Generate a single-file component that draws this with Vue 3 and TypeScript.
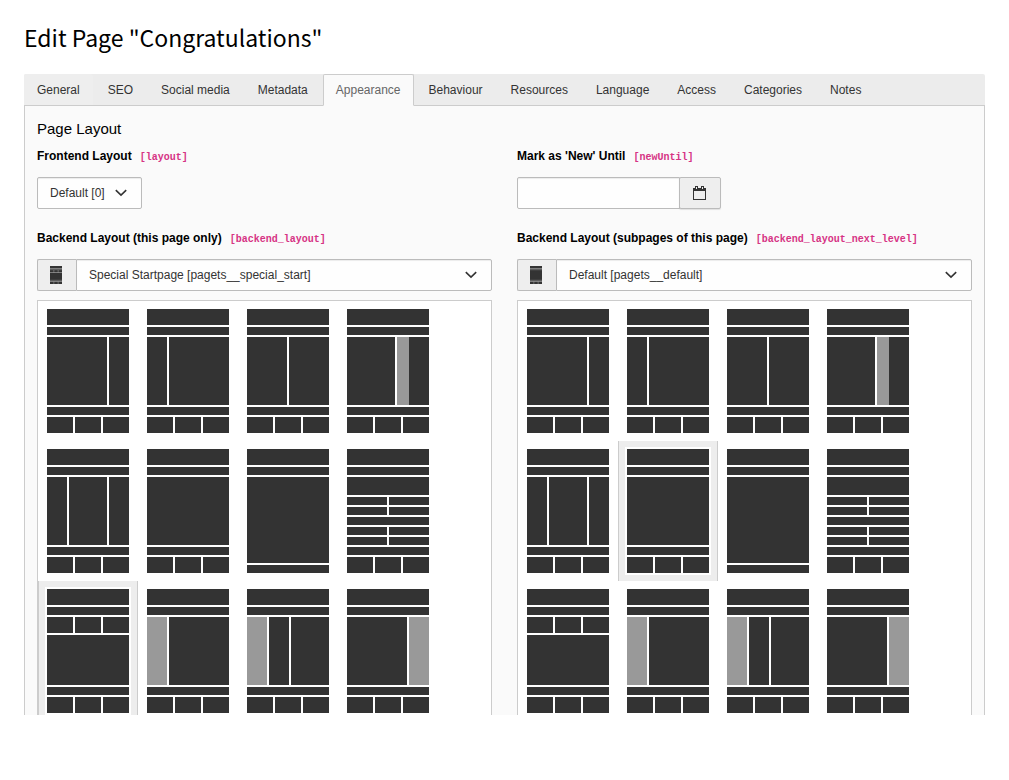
<script setup lang="ts">
import { ref } from 'vue'

interface Block {
  x: number
  y: number
  w: number
  h: number
  muted?: boolean
}

interface Layout {
  id: string
  name: string
  blocks: Block[]
}

const tabs = [
  'General', 'SEO', 'Social media', 'Metadata', 'Appearance', 'Behaviour',
  'Resources', 'Language', 'Access', 'Categories', 'Notes',
]
const activeTab = ref('Appearance')

const full = (y: number, h: number): Block => ({ x: 2, y, w: 82, h })
const thirds = (y: number, h: number): Block[] => [2, 30, 58].map((x) => ({ x, y, w: 26, h }))
const halves = (y: number, h: number): Block[] => [2, 44].map((x) => ({ x, y, w: 40, h }))
const column = (x: number, w: number, muted = false): Block => ({ x, y: 30, w, h: 68, muted })

const header = [full(2, 16), full(20, 8)]
const footer = [full(100, 8), ...thirds(110, 16)]
const page = (...content: Block[]): Block[] => [...header, ...content, ...footer]

const layouts: Layout[] = [
  { id: '2_columns', name: '2 Columns', blocks: page(column(2, 60), column(64, 20)) },
  { id: '2_columns_left', name: '2 Columns Left', blocks: page(column(2, 20), column(24, 60)) },
  { id: '2_columns_50', name: '2 Columns 50/50', blocks: page(column(2, 40), column(44, 40)) },
  { id: '2_columns_offset', name: '2 Columns Offset', blocks: page(column(2, 48), column(52, 12, true), column(64, 20)) },
  { id: '3_columns', name: '3 Columns', blocks: page(column(2, 20), column(24, 38), column(64, 20)) },
  { id: 'default', name: 'Default', blocks: page(column(2, 82)) },
  { id: 'simple', name: 'Simple', blocks: [...header, full(30, 86), full(118, 8)] },
  {
    id: 'special_feature',
    name: 'Special Feature',
    blocks: page(full(30, 18), ...halves(50, 8), ...halves(60, 8), full(70, 8), ...halves(80, 8), ...halves(90, 8)),
  },
  { id: 'special_start', name: 'Special Startpage', blocks: page(...thirds(30, 16), full(48, 50)) },
  { id: 'subnavigation_left', name: 'Subnavigation Left', blocks: page(column(2, 20, true), column(24, 60)) },
  { id: 'subnavigation_left_2', name: 'Subnavigation Left 2 Columns', blocks: page(column(2, 20, true), column(24, 20), column(46, 38)) },
  { id: 'subnavigation_right', name: 'Subnavigation Right', blocks: page(column(2, 60), column(64, 20, true)) },
]

const fields = ref([
  { key: 'backend_layout', label: 'Backend Layout (this page only)', value: 'special_start' },
  { key: 'backend_layout_next_level', label: 'Backend Layout (subpages of this page)', value: 'default' },
])

const blocksOf = (id: string): Block[] => layouts.find((l) => l.id === id)?.blocks ?? []

const frontendLayout = ref('0')
const newUntil = ref('')
</script>

<template>
  <main class="module">
    <h1>Edit Page "Congratulations"</h1>

    <div class="tabs" role="tablist">
      <button
        v-for="tab in tabs"
        :key="tab"
        type="button"
        role="tab"
        class="tab"
        :class="{ active: tab === activeTab, touched: tab === 'General' }"
        :aria-selected="tab === activeTab"
        @click="activeTab = tab"
      >{{ tab }}</button>
    </div>

    <section class="panel">
      <h2>Page Layout</h2>
      <div class="columns">
        <div class="field">
          <div class="caption">
            <label for="layout">Frontend Layout</label><code>[layout]</code>
          </div>
          <div class="select compact">
            <select id="layout" v-model="frontendLayout">
              <option value="0">Default [0]</option>
            </select>
            <svg class="chevron" viewBox="0 0 12 8" aria-hidden="true"><path d="M.8 1.2 6 6.2 11.2 1.2" /></svg>
          </div>
        </div>

        <div class="field">
          <div class="caption">
            <label for="newUntil">Mark as 'New' Until</label><code>[newUntil]</code>
          </div>
          <div class="date">
            <input id="newUntil" v-model="newUntil" type="text">
            <button type="button" aria-label="Open calendar">
              <svg viewBox="0 0 13 14" width="13" height="14" aria-hidden="true">
                <path fill-rule="evenodd" d="M0 2h2V0h3v2h3V0h3v2h2v12H0zM3 1v2h1V1zM9 1v2h1V1zM1 5v8h11V5z" />
              </svg>
            </button>
          </div>
        </div>

        <div v-for="field in fields" :key="field.key" class="field">
          <div class="caption">
            <label :for="field.key">{{ field.label }}</label><code>[{{ field.key }}]</code>
          </div>
          <div class="group">
            <span class="addon">
              <svg viewBox="2 2 82 124" width="12" height="18" preserveAspectRatio="none" aria-hidden="true">
                <rect
                  v-for="(b, i) in blocksOf(field.value)"
                  :key="i"
                  :x="b.x"
                  :y="b.y"
                  :width="b.w"
                  :height="b.h"
                  :class="b.muted ? 'muted' : 'solid'"
                />
              </svg>
            </span>
            <div class="select">
              <select :id="field.key" v-model="field.value">
                <option v-for="l in layouts" :key="l.id" :value="l.id">{{ l.name }} [pagets__{{ l.id }}]</option>
              </select>
              <svg class="chevron" viewBox="0 0 12 8" aria-hidden="true"><path d="M.8 1.2 6 6.2 11.2 1.2" /></svg>
            </div>
          </div>
          <div class="gallery">
            <button
              v-for="l in layouts"
              :key="l.id"
              type="button"
              class="tile"
              :class="{ selected: l.id === field.value }"
              :aria-label="l.name"
              :aria-pressed="l.id === field.value"
              @click="field.value = l.id"
            >
              <svg viewBox="0 0 86 128" width="86" height="128" aria-hidden="true">
                <rect class="paper" width="86" height="128" />
                <rect
                  v-for="(b, i) in l.blocks"
                  :key="i"
                  :x="b.x"
                  :y="b.y"
                  :width="b.w"
                  :height="b.h"
                  :class="b.muted ? 'muted' : 'solid'"
                />
              </svg>
            </button>
          </div>
        </div>
      </div>
    </section>
  </main>
</template>

<style>
body {
  margin: 0;
  background: #fff;
}
</style>

<style scoped>
.module,
.module * {
  box-sizing: border-box;
}

.module {
  padding: 20px 24px 24px;
  color: #000;
  font: 12px/18px "Liberation Sans", Arial, sans-serif;
}

h1 {
  margin: 0 0 20px;
  font: 400 23px/34px "Noto Sans CJK SC", "Noto Sans", sans-serif;
}

.tabs {
  display: flex;
  gap: 2px;
  height: 32px;
  border-bottom: 1px solid #ccc;
  border-radius: 2px 2px 0 0;
  background: #ececec;
}

.tab {
  height: 32px;
  padding: 0 12px;
  border: 1px solid transparent;
  border-radius: 2px 2px 0 0;
  background: none;
  color: #333;
  font: inherit;
}

.tab.touched {
  height: 31px;
  background: #eee;
}

.tab.active {
  border-color: #ccc;
  border-bottom-color: #fafafa;
  background: #fafafa;
  color: #666;
}

.panel {
  overflow: hidden;
  padding: 14px 12px 0;
  border: 1px solid #ccc;
  border-width: 0 1px;
  background: #fafafa;
}

h2 {
  margin: 0 0 9px;
  font-size: 15px;
  font-weight: 400;
  line-height: 18px;
}

.columns {
  display: grid;
  grid-template-columns: 1fr 1fr;
  gap: 20px 25px;
}

.caption {
  display: flex;
  align-items: baseline;
  gap: 8px;
  height: 18px;
  margin-bottom: 12px;
  font-weight: 700;
  white-space: nowrap;
}

code {
  color: #d63384;
  font: 700 10px/18px "Liberation Mono", monospace;
}

.select {
  position: relative;
  flex: 1;
}

.compact {
  width: max-content;
}

select {
  display: block;
  width: 100%;
  height: 32px;
  padding: 0 36px 0 12px;
  border: 1px solid #bbb;
  border-radius: 2px;
  background: #fefefe;
  box-shadow: inset 0 1px 1px rgba(0, 0, 0, 0.075);
  color: #333;
  font: inherit;
  appearance: none;
}

.chevron {
  position: absolute;
  top: 12px;
  right: 15px;
  width: 12px;
  height: 8px;
  fill: none;
  stroke: #333;
  stroke-width: 1.6;
  pointer-events: none;
}

.date,
.group {
  display: flex;
}

input {
  width: 163px;
  height: 32px;
  padding: 0 12px;
  border: 1px solid #bbb;
  border-radius: 2px 0 0 2px;
  background: #fefefe;
  box-shadow: inset 0 1px 1px rgba(0, 0, 0, 0.075);
  font: inherit;
}

.date button {
  display: flex;
  align-items: center;
  height: 32px;
  margin-left: -1px;
  padding: 0 14px 0 13px;
  border: 1px solid #bbb;
  border-radius: 2px;
  background: #eee;
  box-shadow: 0 1px 1px rgba(0, 0, 0, 0.1);
  fill: #333;
}

.addon {
  display: flex;
  align-items: center;
  padding: 0 14px 0 12px;
  border: 1px solid #bbb;
  border-right: 0;
  border-radius: 2px 0 0 2px;
  background: #eee;
}

.group select {
  border-radius: 0 2px 2px 0;
}

.gallery {
  display: flex;
  flex-wrap: wrap;
  margin: 9px 0 -6px;
  border: 1px solid #ccc;
  border-bottom: 0;
  background: #fff;
}

.tile {
  width: 100px;
  height: 140px;
  padding: 6px;
  border: 1px solid transparent;
  border-width: 0 1px;
  background: none;
}

.tile.selected {
  border-color: #ccc;
  background: #ededed;
}

.tile svg {
  display: block;
}

.paper {
  fill: #fff;
}

.solid {
  fill: #333;
}

.muted {
  fill: #999;
}
</style>
